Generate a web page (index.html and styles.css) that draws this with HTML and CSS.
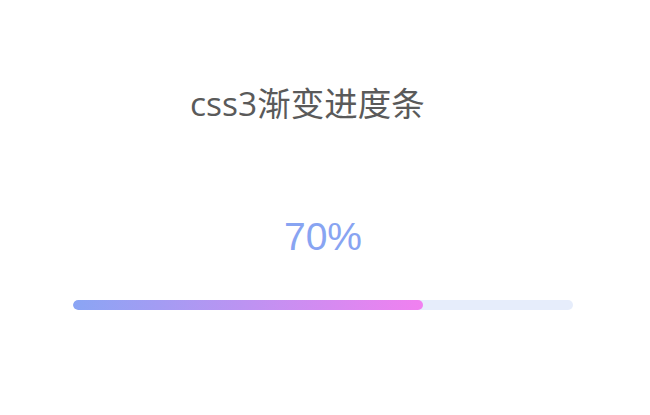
FILE: index.html
```html
<!DOCTYPE html>
<html lang="zh-CN">
<head>
    <meta charset="UTF-8">
    <meta name="viewport" content="width=device-width, initial-scale=1.0">
    <title>css3渐变进度条</title>
    <link rel="stylesheet" href="styles.css">
</head>
<body>
    <div class="page">
        <h1 class="title">css3渐变进度条</h1>
        <div class="progress-box">
            <div class="percent">70%</div>
            <div class="track">
                <div class="bar" style="width: 70%"></div>
            </div>
        </div>
    </div>
</body>
</html>
```

FILE: styles.css
```css
body, html {
    margin: 0;
    padding: 0;
    background-color: #fff;
    font-family: "Liberation Sans", "Noto Sans CJK SC", sans-serif;
}
.page {
    width: 650px;
    height: 415px;
}
.title {
    margin: 0;
    padding: 83px 0 0 190px;
    font-size: 33.5px;
    line-height: 40px;
    font-weight: normal;
    color: #5a5a5a;
    font-family: "Open Sans", "Noto Sans CJK SC", sans-serif;
}
.progress-box {
    width: 500px;
    margin: 94px 0 0 73px;
}
.percent {
    text-align: center;
    font-size: 39px;
    line-height: 40px;
    color: #88a4f2;
}
.track {
    margin-top: 43px;
    height: 10px;
    border-radius: 5px;
    background-color: #e6edfb;
    overflow: hidden;
}
.bar {
    height: 100%;
    border-radius: 5px;
    background: linear-gradient(to right, #8aa5f4, #f180f0);
}
```
